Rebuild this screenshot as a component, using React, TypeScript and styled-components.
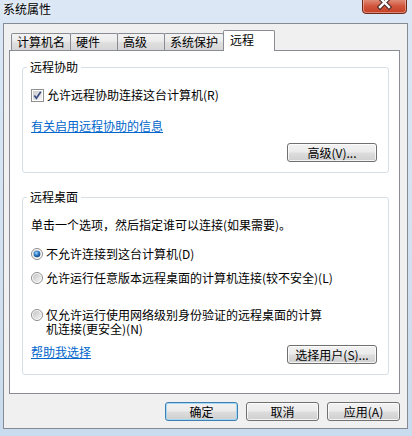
import React from 'react';
import styled, { createGlobalStyle } from 'styled-components';

const GlobalStyle = createGlobalStyle`
  html, body {
    margin: 0;
    padding: 0;
  }
  body {
    font-family: "Noto Sans CJK SC", "Liberation Sans", sans-serif;
    font-size: 12px;
    color: #000;
  }
`;

const TABS = ['计算机名', '硬件', '高级', '系统保护', '远程'];
const ACTIVE_TAB = '远程';

const CloseIcon: React.FC = () => (
  <svg width="45" height="14" viewBox="0 0 45 14">
    <defs>
      <linearGradient id="closeBg" x1="0" y1="0" x2="0" y2="1">
        <stop offset="0" stopColor="#e08a76" />
        <stop offset="0.45" stopColor="#d2553c" />
        <stop offset="1" stopColor="#c23f24" />
      </linearGradient>
    </defs>
    <path
      d="M0.5 0 V10 Q0.5 13.5 4 13.5 H41 Q44.5 13.5 44.5 10 V0"
      fill="url(#closeBg)"
      stroke="#6b2a1c"
    />
    <path d="M1.5 0 V10 Q1.5 12.5 4 12.5 H41 Q43.5 12.5 43.5 10 V0" fill="none" stroke="rgba(255,220,210,0.45)" />
    <g strokeLinecap="square">
      <path d="M18 -2 L27 7 M27 -2 L18 7" stroke="#4a2a2a" strokeWidth="4.5" />
      <path d="M18 -2 L27 7 M27 -2 L18 7" stroke="#fff" strokeWidth="2.4" />
    </g>
  </svg>
);

const CheckIcon: React.FC = () => (
  <svg width="13" height="13" viewBox="0 0 13 13">
    <defs>
      <linearGradient id="chkBg" x1="0" y1="0" x2="1" y2="1">
        <stop offset="0" stopColor="#cbcbcb" />
        <stop offset="1" stopColor="#f6f6f6" />
      </linearGradient>
    </defs>
    <rect x="0.5" y="0.5" width="12" height="12" fill="#fff" stroke="#8e8f8f" />
    <rect x="2" y="2" width="9" height="9" fill="url(#chkBg)" />
    <path d="M3.3 6.4 L5.4 9.2 L9.8 2.8" fill="none" stroke="#3d4f86" strokeWidth="1.7" />
  </svg>
);

const RadioIcon: React.FC<{ checked?: boolean }> = ({ checked }) => (
  <svg width="12" height="12" viewBox="0 0 12 12">
    <defs>
      <linearGradient id="radioOff" x1="0" y1="0" x2="1" y2="1">
        <stop offset="0" stopColor="#c4c4c4" />
        <stop offset="1" stopColor="#f4f4f4" />
      </linearGradient>
      <radialGradient id="radioDot" cx="0.4" cy="0.35" r="0.7">
        <stop offset="0" stopColor="#a6d8f8" />
        <stop offset="0.5" stopColor="#2f7dc9" />
        <stop offset="1" stopColor="#123f7c" />
      </radialGradient>
    </defs>
    <circle cx="6" cy="6" r="5.5" fill="#fff" stroke="#8b8b8b" />
    <circle cx="6" cy="6" r="4.2" fill="url(#radioOff)" />
    {checked && <circle cx="6" cy="6" r="3.3" fill="url(#radioDot)" />}
  </svg>
);

const App: React.FC = () => {
  return (
    <>
      <GlobalStyle />
      <Window>
        <TitleBar>
          <Title>系统属性</Title>
          <CloseButton>
            <CloseIcon />
          </CloseButton>
        </TitleBar>
        <Client>
          <TabStrip>
            {TABS.map((tab) => (
              <Tab key={tab} $active={tab === ACTIVE_TAB}>
                {tab}
              </Tab>
            ))}
          </TabStrip>
          <Panel>
            <Group>
              <Legend>远程协助</Legend>
              <GroupBody>
                <CheckRow $mt={14}>
                  <CheckIcon />
                  <span>允许远程协助连接这台计算机(R)</span>
                </CheckRow>
                <Link $mt={17}>有关启用远程协助的信息</Link>
                <ActionRow $mt={11}>
                  <span />
                  <Button $w={90}>高级(V)...</Button>
                </ActionRow>
              </GroupBody>
            </Group>
            <Group>
              <Legend>远程桌面</Legend>
              <GroupBody>
                <Hint $mt={14}>单击一个选项，然后指定谁可以连接(如果需要)。</Hint>
                <RadioRow $mt={15}>
                  <RadioIcon checked />
                  <span>不允许连接到这台计算机(D)</span>
                </RadioRow>
                <RadioRow $mt={11}>
                  <RadioIcon />
                  <span>允许运行任意版本远程桌面的计算机连接(较不安全)(L)</span>
                </RadioRow>
                <RadioRow $mt={24} $lh={14}>
                  <RadioIcon />
                  <span>
                    仅允许运行使用网络级别身份验证的远程桌面的计算
                    <br />
                    机连接(更安全)(N)
                  </span>
                </RadioRow>
                <ActionRow $mt={9}>
                  <Link>帮助我选择</Link>
                  <Button $w={90}>选择用户(S)...</Button>
                </ActionRow>
              </GroupBody>
            </Group>
          </Panel>
          <Footer>
            <Button $w={73} $default>
              确定
            </Button>
            <Button $w={73}>取消</Button>
            <Button $w={73}>应用(A)</Button>
          </Footer>
        </Client>
      </Window>
    </>
  );
};

const Window = styled.div`
  width: 412px;
  height: 436px;
  box-sizing: border-box;
  padding: 0 4px 7px 3px;
  display: flex;
  flex-direction: column;
  background: linear-gradient(180deg, #dbe7f5 0%, #d2e1f1 60%, #c9dbee 100%);
  overflow: hidden;
`;

const TitleBar = styled.div`
  height: 23px;
  display: flex;
  align-items: flex-start;
  justify-content: space-between;
  flex-shrink: 0;
`;

const Title = styled.div`
  margin-top: 2px;
  font-size: 12px;
  line-height: 14px;
  color: #000;
  text-shadow: 0 0 6px rgba(255, 255, 255, 0.9);
`;

const CloseButton = styled.div`
  width: 45px;
  height: 14px;
  margin-right: 1px;
  display: flex;
`;

const Client = styled.div`
  height: 406px;
  box-sizing: border-box;
  border: 1px solid #858b94;
  background: #f0f0f0;
  padding: 6px 7px 7px 5px;
  display: flex;
  flex-direction: column;
`;

const TabStrip = styled.div`
  height: 20px;
  display: flex;
  align-items: flex-end;
  padding-left: 2px;
  position: relative;
  z-index: 1;
`;

const Tab = styled.div<{ $active?: boolean }>`
  box-sizing: border-box;
  min-width: ${(p) => (p.$active ? 52 : 48)}px;
  height: ${(p) => (p.$active ? 21 : 17)}px;
  margin-bottom: ${(p) => (p.$active ? -1 : 0)}px;
  padding: ${(p) => (p.$active ? '1px 7px 0 6px' : '0 5px')};
  border: 1px solid #898c95;
  border-bottom: none;
  border-radius: 2px 2px 0 0;
  background: ${(p) =>
    p.$active
      ? '#ffffff'
      : 'linear-gradient(180deg, #f3f3f3 0%, #ebebeb 45%, #dedede 55%, #d6d6d6 100%)'};
  font-size: 12px;
  line-height: 16px;
  white-space: nowrap;
  & + & {
    margin-left: -1px;
  }
`;

const Panel = styled.div`
  height: 344px;
  box-sizing: border-box;
  background: #fff;
  border: 1px solid #898c95;
  padding: 9px 10px 16px 12px;
  display: flex;
  flex-direction: column;
  gap: 17px;
`;

const Group = styled.fieldset`
  margin: 0;
  min-width: 0;
  border: 1px solid #d5dfe5;
  border-radius: 3px;
  padding: 0 11px 10px 8px;
`;

const Legend = styled.legend`
  padding: 0 3px;
  margin-left: -4px;
  font-size: 12px;
  line-height: 14px;
`;

const GroupBody = styled.div`
  display: flex;
  flex-direction: column;
`;

const CheckRow = styled.div<{ $mt?: number }>`
  margin-top: ${(p) => p.$mt ?? 0}px;
  height: 14px;
  display: flex;
  align-items: center;
  gap: 3px;
  line-height: 14px;
  white-space: nowrap;
`;

const Hint = styled.div<{ $mt?: number }>`
  margin-top: ${(p) => p.$mt ?? 0}px;
  line-height: 14px;
  white-space: nowrap;
`;

const RadioRow = styled.div<{ $mt?: number; $lh?: number }>`
  margin-top: ${(p) => p.$mt ?? 0}px;
  display: flex;
  align-items: flex-start;
  gap: 3px;
  line-height: ${(p) => p.$lh ?? 13}px;
  white-space: nowrap;

  svg {
    flex-shrink: 0;
    margin-top: ${(p) => ((p.$lh ?? 13) - 12) / 2}px;
  }
`;

const Link = styled.a<{ $mt?: number }>`
  margin-top: ${(p) => p.$mt ?? 0}px;
  align-self: flex-start;
  color: #0066cc;
  text-decoration: underline;
  line-height: 13px;
  cursor: pointer;
`;

const ActionRow = styled.div<{ $mt?: number }>`
  margin-top: ${(p) => p.$mt ?? 0}px;
  display: flex;
  align-items: center;
  justify-content: space-between;
`;

const Button = styled.button<{ $w: number; $default?: boolean }>`
  width: ${(p) => p.$w}px;
  height: 19px;
  box-sizing: border-box;
  padding: 0;
  border: 1px solid ${(p) => (p.$default ? '#3c7fb1' : '#707070')};
  border-radius: 3px;
  background: linear-gradient(180deg, #f2f2f2 0%, #ebebeb 48%, #dddddd 52%, #cfcfcf 100%);
  box-shadow: inset 0 0 0 1px
    ${(p) => (p.$default ? 'rgba(160, 215, 245, 0.95)' : 'rgba(255, 255, 255, 0.75)')};
  font-family: "Noto Sans CJK SC", "Liberation Sans", sans-serif;
  font-size: 12px;
  line-height: 17px;
  color: #000;
  text-align: center;
  white-space: nowrap;
`;

const Footer = styled.div`
  margin-top: 8px;
  display: flex;
  justify-content: flex-end;
  gap: 8px;
`;

export default App;
